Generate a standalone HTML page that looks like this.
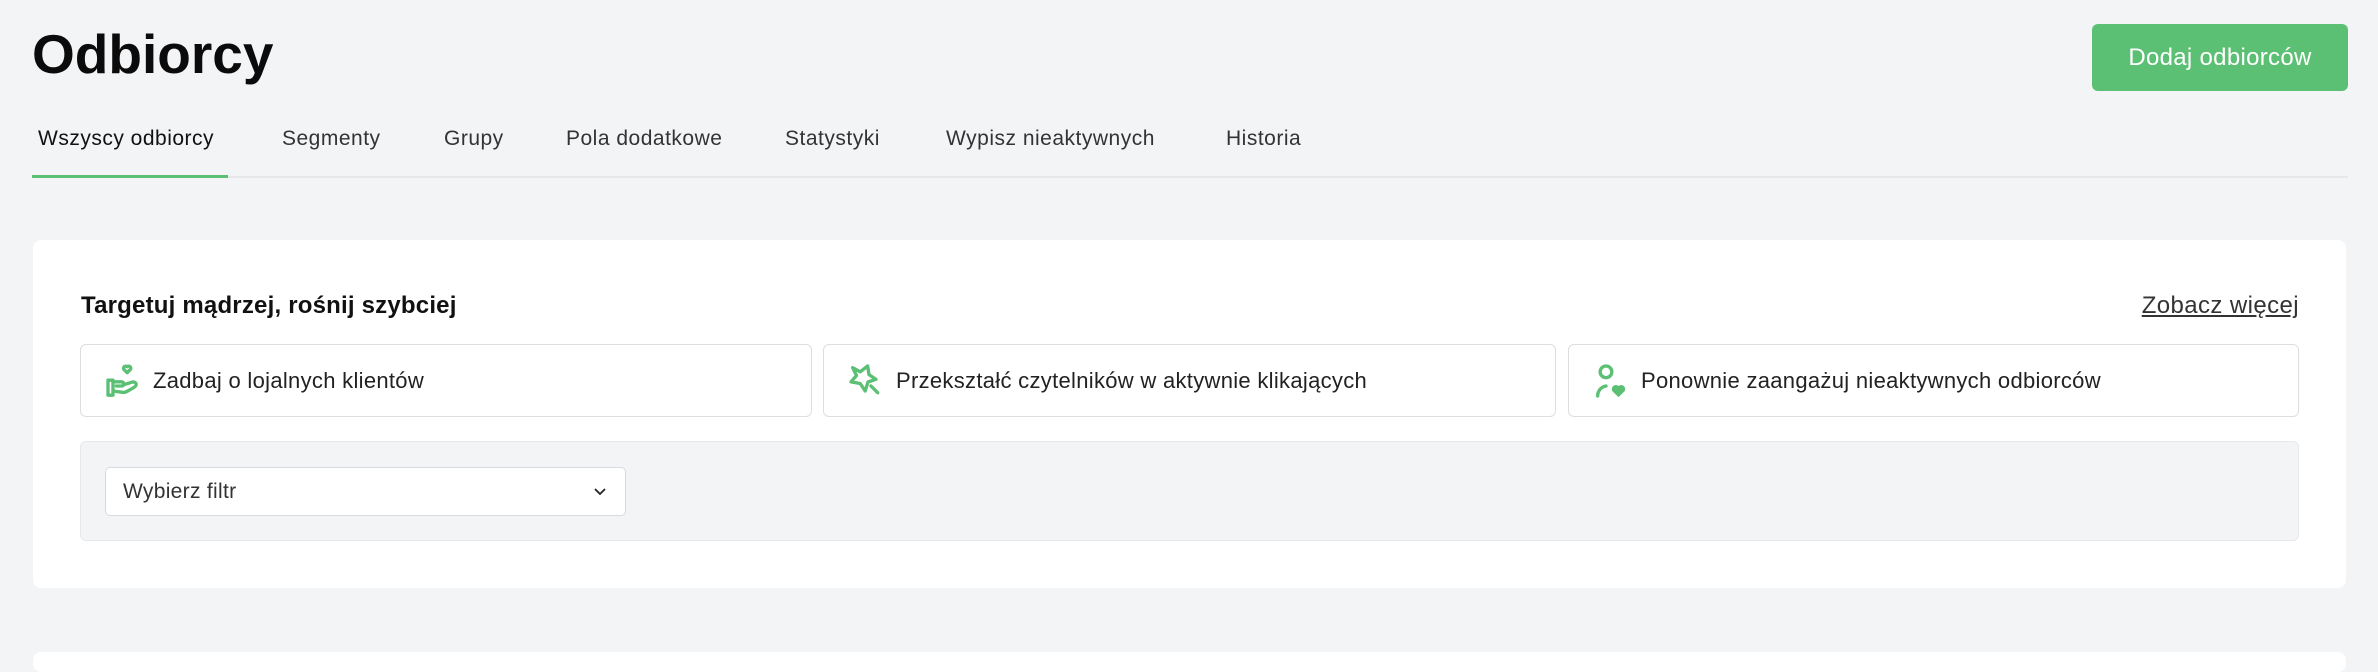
<!DOCTYPE html>
<html><head><meta charset="utf-8"><style>
*{box-sizing:border-box;margin:0;padding:0}
body{width:2378px;height:660px;overflow:hidden;background:#f3f4f6;font-family:"Liberation Sans",sans-serif;color:#111;position:relative}
.abs{position:absolute}
h1{position:absolute;left:32px;top:22px;font-size:55px;font-weight:700;letter-spacing:0px;color:#0b0b0b}
.btn{left:2092px;top:24px;width:256px;height:67px;background:#5bbf74;border-radius:6px;color:#fff;font-size:24px;display:flex;align-items:center;justify-content:center;letter-spacing:0.3px}
.tabs{left:32px;top:104px;width:2316px;height:74px;border-bottom:2px solid #e5e7eb}
.tab{position:absolute;top:23px;font-size:21px;color:#333;letter-spacing:0.5px}
.tab.act{color:#111}
.ul{left:32px;top:175px;width:196px;height:3px;background:#5bbf74}
.card{left:33px;top:240px;width:2313px;height:348px;background:#fff;border-radius:8px}
.ttl{left:81px;top:292px;font-size:24px;font-weight:700;letter-spacing:0.2px}
.more{right:79px;top:292px;font-size:24px;text-decoration:underline;color:#333;letter-spacing:0.4px}
.opt{top:344px;height:73px;border:1.5px solid #dcdee2;border-radius:6px;background:#fff;display:flex;align-items:center;font-size:22px;color:#222;letter-spacing:0.3px}
.opt svg{margin-left:22px;margin-right:10px}
.panel{left:80px;top:441px;width:2219px;height:100px;background:#f3f4f6;border:1.5px solid #e7e8eb;border-radius:6px}
.sel{left:105px;top:467px;width:521px;height:49px;background:#fff;border:1.5px solid #d8dadf;border-radius:5px;font-size:21px;color:#333;padding-left:17px;line-height:48px;letter-spacing:0.3px}
.card2{left:33px;top:652px;width:2313px;height:20px;background:#fff;border-radius:8px}
</style></head><body>
<h1>Odbiorcy</h1>
<div class="abs btn">Dodaj odbiorców</div>
<div class="abs tabs">
<span class="tab act" style="left:6px">Wszyscy odbiorcy</span>
<span class="tab" style="left:250px">Segmenty</span>
<span class="tab" style="left:412px">Grupy</span>
<span class="tab" style="left:534px">Pola dodatkowe</span>
<span class="tab" style="left:753px">Statystyki</span>
<span class="tab" style="left:914px">Wypisz nieaktywnych</span>
<span class="tab" style="left:1194px">Historia</span>
</div>
<div class="abs ul"></div>
<div class="abs card"></div>
<div class="abs ttl">Targetuj mądrzej, rośnij szybciej</div>
<div class="abs more">Zobacz więcej</div>
<div class="abs opt" style="left:80px;width:732px">
<svg width="40" height="40" viewBox="0 0 24 24" fill="none" stroke="#5bbf74" stroke-width="2" stroke-linecap="round" stroke-linejoin="round"><path d="M14.5 7l-2-2a1.3 1.3 0 0 1 2-1.6 1.3 1.3 0 0 1 2 1.6z"/><path d="M3 11.5v9h3v-9z"/><path d="M6 12.5h5c1 0 1.5.6 1.5 1.3S12 15 11 15H8"/><path d="M12.3 14.3l5-1.6c1.5-.4 2.6.4 2.6 1.3 0 .8-.6 1.4-1.6 2l-4 2.3c-1 .6-2.2.7-3.3.4L6 18"/></svg>
Zadbaj o lojalnych klientów</div>
<div class="abs opt" style="left:823px;width:733px">
<svg width="40" height="40" viewBox="0 0 24 24" fill="none" stroke="#5bbf74" stroke-width="2" stroke-linecap="round" stroke-linejoin="round"><path d="M4 4l4.5 2.5L13 3l.8 5.2L18 11l-4.8 1.6L11.5 18 8.5 13.5 3 12.5l3.3-3.8z"/><path d="M15 15l4 4"/></svg>
Przekształć czytelników w aktywnie klikających</div>
<div class="abs opt" style="left:1568px;width:731px">
<svg width="40" height="40" viewBox="0 0 24 24" fill="none" stroke="#5bbf74" stroke-width="2" stroke-linecap="round"><circle cx="9" cy="6.5" r="3.5"/><path d="M4 21c0-3 2-5.5 5-6"/><path d="M16.5 21l-3.3-3.2a2 2 0 0 1 3.3-2.2 2 2 0 0 1 3.3 2.2z" fill="#5bbf74" stroke-width="1"/></svg>
Ponownie zaangażuj nieaktywnych odbiorców</div>
<div class="abs panel"></div>
<div class="abs sel">Wybierz filtr
<svg class="abs" style="left:487px;top:19px" width="14" height="9" viewBox="0 0 14 9" fill="none" stroke="#222" stroke-width="1.8"><path d="M2 2l5 5 5-5"/></svg></div>
<div class="abs card2"></div>
</body></html>
